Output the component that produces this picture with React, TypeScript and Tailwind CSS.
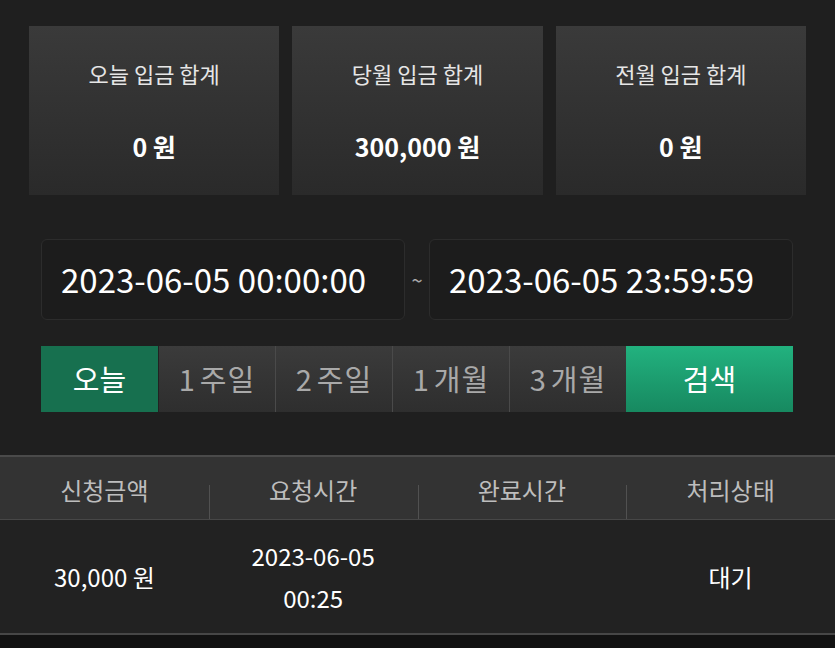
import React from 'react'

const font = { fontFamily: '"Noto Sans CJK KR", "Noto Sans", sans-serif' }

const summary = [
  { label: '오늘 입금 합계', value: '0 원' },
  { label: '당월 입금 합계', value: '300,000 원' },
  { label: '전월 입금 합계', value: '0 원' },
]

const ranges = ['1주일', '2주일', '1개월', '3개월']

const columns = ['신청금액', '요청시간', '완료시간', '처리상태']

export default function App() {
  return (
    <div className="flex h-[648px] w-full flex-col bg-[#1f1f1f] text-white" style={font}>
      {/* summary cards */}
      <div className="grid grid-cols-3 gap-[13px] px-[29px] pt-[26px]">
        {summary.map((s) => (
          <div
            key={s.label}
            className="flex h-[169px] flex-col items-center bg-gradient-to-b from-[#3a3a3a] to-[#2a2a2a]"
          >
            <div className="mt-[31px] text-[22px] leading-[32px] text-[#e6e6e6]">{s.label}</div>
            <div className="mt-[40px] text-[25px] font-bold leading-[34px]">{s.value}</div>
          </div>
        ))}
      </div>

      {/* date range */}
      <div className="mt-[44px] flex items-center px-[41px] pr-[42px]">
        <div className="flex h-[81px] w-[364px] items-center rounded-md border border-[#2c2c2c] bg-[#1c1c1c] pl-[19px] text-[33px] text-white">
          2023-06-05 00:00:00
        </div>
        <div className="flex-1 text-center text-[20px] text-[#aaa]">~</div>
        <div className="flex h-[81px] w-[364px] items-center rounded-md border border-[#2c2c2c] bg-[#1c1c1c] pl-[19px] text-[33px] text-white">
          2023-06-05 23:59:59
        </div>
      </div>

      {/* quick range buttons */}
      <div className="mt-[26px] flex h-[66px] px-[41px] pr-[42px]">
        <button className="flex w-[117px] items-center justify-center bg-[#17704f] text-[29px] text-white">
          오늘
        </button>
        {ranges.map((r, i) => (
          <button
            key={r}
            className={`flex w-[117px] items-center justify-center bg-gradient-to-b from-[#3b3b3b] to-[#2e2e2e] text-[29px] tracking-[1px] text-[#a9a9a9] ${
              i > 0 ? 'border-l border-[#4a4a4a]' : 'border-l border-[#222]'
            }`}
          >
            <span className="mr-[4px]">{r.slice(0, 1)}</span>
            {r.slice(1)}
          </button>
        ))}
        <button className="flex flex-1 items-center justify-center bg-gradient-to-b from-[#22b27f] to-[#178960] text-[29px] text-white">
          검색
        </button>
      </div>

      {/* table */}
      <div className="mt-[43px]">
        <div className="grid h-[65px] grid-cols-4 border-t-2 border-b border-t-[#4a4a4a] border-b-[#474747] bg-[#333]">
          {columns.map((c, i) => (
            <div key={c} className="relative flex items-center justify-center pt-[4px] text-[24px] text-[#bdbdbd]">
              {i > 0 && <span className="absolute bottom-0 left-0 h-[34px] w-px bg-[#515151]" />}
              {c}
            </div>
          ))}
        </div>
        <div className="grid h-[115px] grid-cols-4 border-b-2 border-[#474747] bg-[#222] text-[24px] text-white">
          <div className="flex items-center justify-center">30,000 원</div>
          <div className="flex flex-col items-center justify-center leading-[42px]">
            <span>2023-06-05</span>
            <span>00:25</span>
          </div>
          <div />
          <div className="flex items-center justify-center">대기</div>
        </div>
      </div>
      <div className="flex-1 bg-[#121212]" />
    </div>
  )
}
